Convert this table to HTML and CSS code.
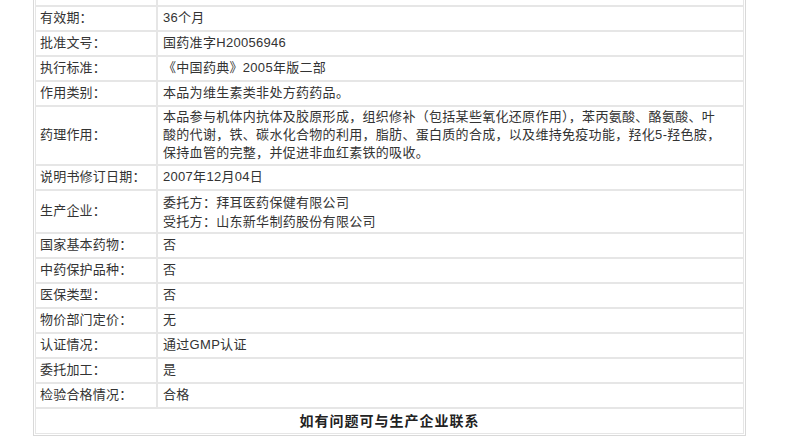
FILE: index.html
```html
<!DOCTYPE html>
<html>
	<head>
		<meta charset="UTF-8">
		<title>药品说明书</title>
		<link rel="stylesheet" href="styles.css">
	</head>
	<body>
		<div class="spec">
			<table class="spec-table">
				<tr><td class="label">包装：</td><td class="value">塑料瓶装，100片/瓶</td></tr>
				<tr><td class="label">有效期：</td><td class="value">36个月</td></tr>
				<tr><td class="label">批准文号：</td><td class="value">国药准字H20056946</td></tr>
				<tr><td class="label">执行标准：</td><td class="value">《中国药典》2005年版二部</td></tr>
				<tr><td class="label">作用类别：</td><td class="value">本品为维生素类非处方药药品。</td></tr>
				<tr>
					<td class="label">药理作用：</td>
					<td class="value multi">本品参与机体内抗体及胶原形成，组织修补（包括某些氧化还原作用），苯丙氨酸、酪氨酸、叶<br>酸的代谢，铁、碳水化合物的利用，脂肪、蛋白质的合成，以及维持免疫功能，羟化5-羟色胺，<br>保持血管的完整，并促进非血红素铁的吸收。</td>
				</tr>
				<tr><td class="label">说明书修订日期：</td><td class="value">2007年12月04日</td></tr>
				<tr>
					<td class="label">生产企业：</td>
					<td class="value multi two">委托方：拜耳医药保健有限公司<br>受托方：山东新华制药股份有限公司</td>
				</tr>
				<tr><td class="label">国家基本药物：</td><td class="value">否</td></tr>
				<tr><td class="label">中药保护品种：</td><td class="value">否</td></tr>
				<tr><td class="label">医保类型：</td><td class="value">否</td></tr>
				<tr><td class="label">物价部门定价：</td><td class="value">无</td></tr>
				<tr><td class="label">认证情况：</td><td class="value">通过GMP认证</td></tr>
				<tr><td class="label">委托加工：</td><td class="value">是</td></tr>
				<tr><td class="label">检验合格情况：</td><td class="value">合格</td></tr>
				<tr><td class="foot" colspan="2">如有问题可与生产企业联系</td></tr>
			</table>
		</div>
	</body>
</html>
```
FILE: styles.css
```css
*{
	margin: 0;
	padding: 0;
}
body{
	background: #fff;
	font-family: "Liberation Sans", "Noto Sans CJK SC", sans-serif;
	font-size: 13px;
	color: #333;
}
.spec{
	width: 709px;
	margin: -21px 0 0 33px;
	border: 1px solid #d9d9d9;
	padding: 1px;
}
.spec-table{
	width: 100%;
	border-collapse: separate;
	border-spacing: 0;
	table-layout: fixed;
}
.spec-table td{
	box-sizing: border-box;
	border: 1px solid #e6e6e6;
	height: 25px;
	line-height: 18px;
	padding: 2px 0 3px;
	vertical-align: middle;
}
.spec-table td.label{
	width: 122px;
	padding-left: 4px;
	letter-spacing: 0.2px;
}
.spec-table td.value{
	padding-left: 5px;
	padding-right: 2px;
	letter-spacing: 0.3px;
}
.spec-table td.multi{
	padding-top: 1px;
	padding-bottom: 2px;
	line-height: 18px;
}
.spec-table td.two{
	padding-top: 2px;
	padding-bottom: 1px;
	line-height: 19px;
}
.spec-table td.foot{
	height: 26px;
	text-align: center;
	font-size: 14px;
	font-weight: bold;
	color: #222;
	letter-spacing: 1px;
}
```
